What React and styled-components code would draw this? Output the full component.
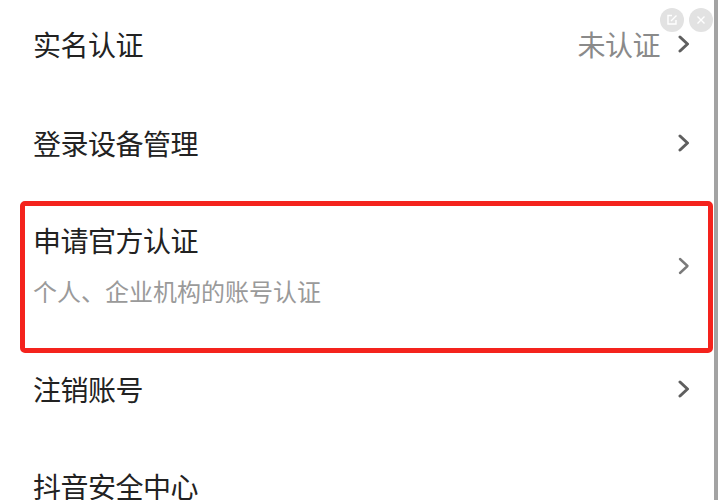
import React from "react";
import styled, { createGlobalStyle } from "styled-components";

const GlobalStyle = createGlobalStyle`
  html, body {
    margin: 0;
    padding: 0;
    background: #fff;
    overflow: hidden;
  }
  body {
    font-family: "Noto Sans CJK SC", "Noto Sans", sans-serif;
  }
`;

const Page = styled.div`
  position: relative;
  width: 722px;
  height: 500px;
  overflow: hidden;
  display: flex;
  background: #fff;
`;

const List = styled.div`
  flex: 1;
  display: flex;
  flex-direction: column;
  margin-top: -6px;
`;

const EdgeBar = styled.div`
  width: 4px;
  margin-right: 4px;
  background: #a3a3a3;
`;

const Row = styled.div`
  position: relative;
  display: flex;
  align-items: center;
  height: ${(p) => (p.tall ? "147px" : "99px")};
  padding: 0 24px 0 33px;
  flex-shrink: 0;

  ${(p) =>
    p.marked &&
    `
    &::after {
      content: "";
      position: absolute;
      top: 9px;
      bottom: -14px;
      left: 20px;
      right: 1px;
      border: 5px solid #f4231d;
      border-radius: 5px;
      pointer-events: none;
    }
  `}
`;

const Texts = styled.div`
  flex: 1;
  display: flex;
  flex-direction: column;
  gap: 15px;
  ${(p) => p.top && "align-self: flex-start; padding-top: 29px;"}
`;

const Title = styled.div`
  font-size: 28px;
  line-height: 38px;
  color: #222;
  letter-spacing: -0.5px;
`;

const Sub = styled.div`
  font-size: 24px;
  line-height: 33px;
  color: #9a9a9a;
`;

const Value = styled.div`
  font-size: 28px;
  line-height: 38px;
  color: #8a8a8a;
  margin-right: 18px;
  letter-spacing: -0.5px;
`;

const Chevron = styled.svg`
  width: 12px;
  height: 18px;
  flex-shrink: 0;
`;

const CornerButtons = styled.div`
  position: absolute;
  top: 8px;
  right: 9px;
  display: flex;
  gap: 5px;
`;

const RoundBtn = styled.div`
  width: 24px;
  height: 24px;
  border-radius: 50%;
  background: #e2e2e2;
  display: flex;
  align-items: center;
  justify-content: center;
`;

const Arrow = ({ light }) => (
  <Chevron viewBox="0 0 12 18">
    <path
      d="M2 2 L9.5 9 L2 16"
      fill="none"
      stroke={light ? "#7a7a7a" : "#5f5f5f"}
      strokeWidth={light ? 2.4 : 3}
      strokeLinecap="round"
      strokeLinejoin="round"
    />
  </Chevron>
);

const rows = [
  { title: "实名认证", value: "未认证" },
  { title: "登录设备管理" },
  { title: "申请官方认证", sub: "个人、企业机构的账号认证", tall: true, marked: true },
  { title: "注销账号" },
  { title: "抖音安全中心", tall: true },
];

export default function App() {
  return (
    <>
      <GlobalStyle />
      <Page>
        <List>
          {rows.map((r) => (
            <Row key={r.title} tall={r.tall ? 1 : 0} marked={r.marked ? 1 : 0}>
              <Texts top={r.tall ? 1 : 0}>
                <Title>{r.title}</Title>
                {r.sub && <Sub>{r.sub}</Sub>}
              </Texts>
              {r.value && <Value>{r.value}</Value>}
              <Arrow light={r.marked} />
            </Row>
          ))}
        </List>
        <EdgeBar />
        <CornerButtons>
          <RoundBtn>
            <svg width="12" height="12" viewBox="0 0 12 12">
              <path
                d="M6 1.5 H2 V10 H10 V6 M5 7 L10.5 1.5"
                fill="none"
                stroke="#fff"
                strokeWidth="1.4"
              />
            </svg>
          </RoundBtn>
          <RoundBtn>
            <svg width="12" height="12" viewBox="0 0 12 12">
              <path
                d="M2.5 2.5 L9.5 9.5 M9.5 2.5 L2.5 9.5"
                stroke="#fff"
                strokeWidth="1.4"
              />
            </svg>
          </RoundBtn>
        </CornerButtons>
      </Page>
    </>
  );
}
